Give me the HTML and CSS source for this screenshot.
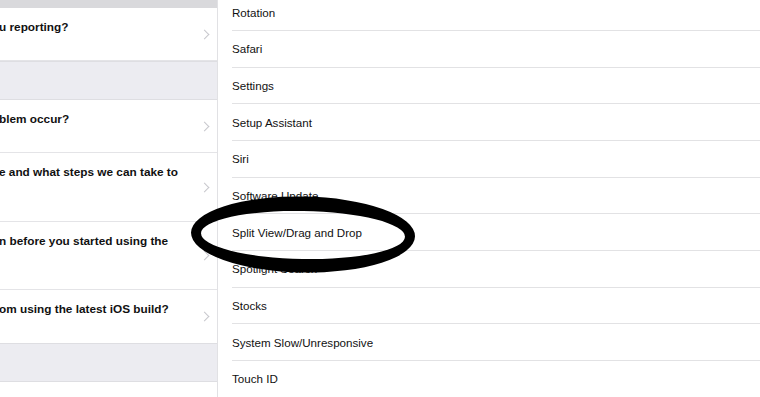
FILE: index.html
```html
<!doctype html>
<html lang="en">
<head>
    <meta charset="UTF-8">
    <title>Feedback</title>
    <link rel="stylesheet" href="styles.css">
</head>
<body>
    <div class="screen">
        <div class="questions">
            <div class="selected"></div>
            <div class="question">
                <p>u reporting?</p>
                <i class="chevron"></i>
            </div>
            <div class="gap"></div>
            <div class="question">
                <p>blem occur?</p>
                <i class="chevron"></i>
            </div>
            <div class="question tall">
                <p>e and what steps we can take to</p>
                <i class="chevron"></i>
            </div>
            <div class="question tall short">
                <p>n before you started using the</p>
                <i class="chevron"></i>
            </div>
            <div class="question last">
                <p>om using the latest iOS build?</p>
                <i class="chevron"></i>
            </div>
            <div class="gap"></div>
            <div class="question"></div>
        </div>
        <div class="areas">
            <ul class="list">
                <li>Rotation</li>
                <li>Safari</li>
                <li>Settings</li>
                <li>Setup Assistant</li>
                <li>Siri</li>
                <li>Software Update</li>
                <li>Split View/Drag and Drop</li>
                <li>Spotlight Search</li>
                <li>Stocks</li>
                <li>System Slow/Unresponsive</li>
                <li>Touch ID</li>
            </ul>
        </div>
        <svg class="circle" width="235" height="95" viewBox="0 0 235 95">
            <!-- hand drawn marker ring -->
            <path fill="#000" fill-rule="evenodd" transform="rotate(1 118 45)"
                  d="M6,44.5 a112,38 0 1,0 224,0 a112,38 0 1,0 -224,0 Z
                     M16,45 a102,24 0 1,0 204,0 a102,24 0 1,0 -204,0 Z"/>
        </svg>
    </div>
</body>
</html>
```

FILE: styles.css
```css
* {
    margin: 0;
    padding: 0;
    box-sizing: border-box;
}
body {
    background: #fff;
    font-family: "Liberation Sans", Arial, sans-serif;
    color: #111;
}
.screen {
    width: 760px;
    height: 397px;
    display: flex;
    overflow: hidden;
    position: relative;
}
.questions {
    width: 218px;
    flex-shrink: 0;
    border-right: 1px solid #e1e1e4;
    display: flex;
    flex-direction: column;
    overflow: hidden;
}
.questions > div {
    flex-shrink: 0;
}
.selected {
    height: 8px;
    background-color: #d9d9dc;
}
.gap {
    height: 39px;
    background-color: #ececf1;
    border-top: 1px solid #dedee2;
    border-bottom: 1px solid #dedee2;
}
.question {
    height: 53px;
    display: flex;
    align-items: center;
    justify-content: space-between;
    padding: 0 8px 0 0;
    border-bottom: 1px solid #e4e4e7;
    background: #fff;
}
.question.tall {
    height: 69px;
}
.question.short {
    height: 68px;
}
.question.last {
    border-bottom: none;
}
.question p {
    align-self: flex-start;
    padding-top: 12px;
    margin-left: -1px;
    font-size: 11.8px;
    line-height: 15px;
    font-weight: bold;
    white-space: nowrap;
}
.chevron {
    width: 7px;
    height: 7px;
    border-top: 1.5px solid #c7c7cc;
    border-right: 1.5px solid #c7c7cc;
    transform: rotate(45deg);
    margin-right: 1px;
}
.areas {
    flex: 1;
    padding-left: 14px;
}
.list {
    list-style: none;
    margin-top: -5.6px;
}
.list li {
    height: 36.67px;
    display: flex;
    align-items: center;
    font-size: 11.6px;
    border-bottom: 1px solid #e2e2e4;
}
.circle {
    position: absolute;
    left: 185px;
    top: 190px;
}
```
